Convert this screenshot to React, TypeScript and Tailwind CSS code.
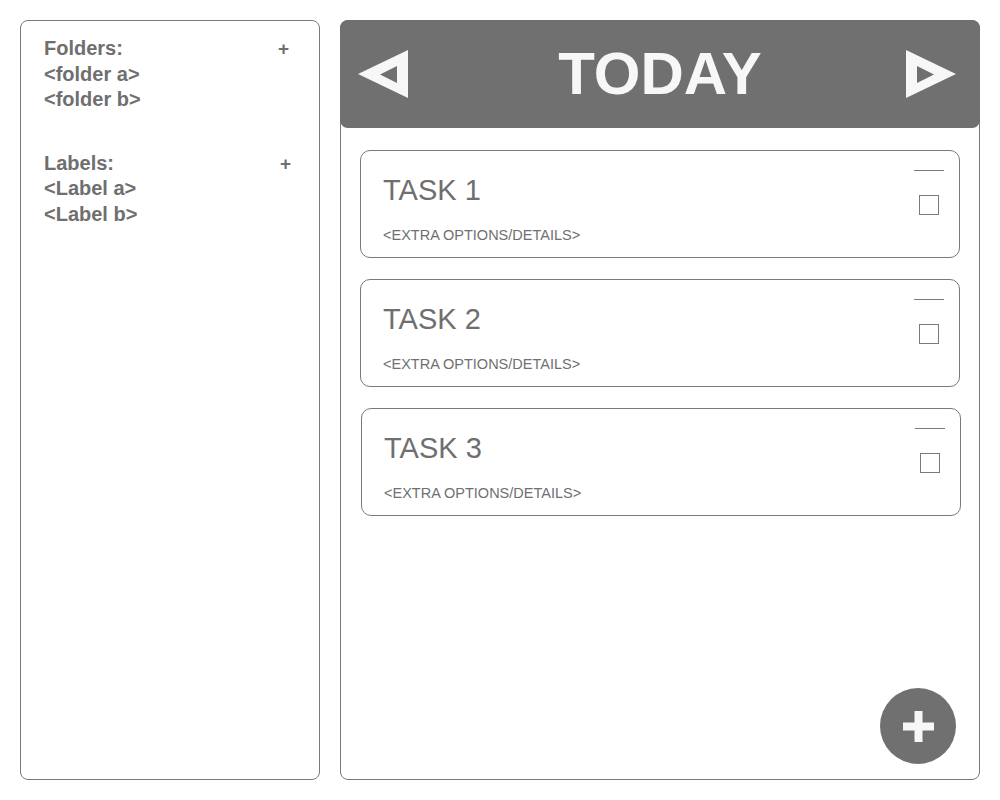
// Today view wireframe: sidebar with folders/labels, task list on the right

const tasks = [
  { title: 'TASK 1', shift: false },
  { title: 'TASK 2', shift: false },
  { title: 'TASK 3', shift: true },
]

function Arrow({ dir }: { dir: 'left' | 'right' }) {
  const d =
    dir === 'left'
      ? 'M50 0 L0 24 L50 48 Z M39 16 L22 24.5 L39 33 Z'
      : 'M0 0 L50 24 L0 48 Z M11 16 L28 24.5 L11 33 Z'
  return (
    <svg width="50" height="48" viewBox="0 0 50 48" aria-hidden="true">
      <path d={d} fill="#f7f7f7" fillRule="evenodd" />
    </svg>
  )
}

function Section({ title, items, plusPad }: { title: string; items: string[]; plusPad: string }) {
  return (
    <div className="flex flex-col">
      <div className={`flex items-center justify-between ${plusPad}`}>
        <span>{title}</span>
        <span className="text-[19px]">+</span>
      </div>
      {items.map((item) => (
        <span key={item}>{item}</span>
      ))}
    </div>
  )
}

function TaskCard({ title, shift }: { title: string; shift: boolean }) {
  return (
    <div
      className={`flex h-[108px] justify-between rounded-[10px] border border-[#7a7a7a] bg-white ${
        shift ? 'ml-[20px] mr-[18px]' : 'mx-[19px]'
      }`}
    >
      <div className="flex flex-col pl-[22px] pt-[25px]">
        <span className="text-[29px] leading-none text-[#6f6f6f]">{title}</span>
        <span className="mt-[23px] text-[14.5px] leading-none text-[#707070]">
          &lt;EXTRA OPTIONS/DETAILS&gt;
        </span>
      </div>
      <div className="flex flex-col items-end pr-[15px] pt-[19px]">
        <div className="h-px w-[30px] bg-[#7a7a7a]" />
        <div className="mr-[5px] mt-[24px] h-5 w-5 border border-[#7a7a7a]" />
      </div>
    </div>
  )
}

export default function App() {
  return (
    <div
      className="flex h-[800px] w-[1000px] gap-5 bg-white p-5"
      style={{ fontFamily: '"Liberation Sans", Arial, sans-serif' }}
    >
      {/* Sidebar */}
      <aside className="flex w-[300px] flex-col gap-[38px] rounded-lg border border-[#7a7a7a] pl-[23px] pt-[15px] text-[20px] font-bold leading-[25.5px] text-[#6f6f6f]">
        <Section title="Folders:" items={['<folder a>', '<folder b>']} plusPad="pr-[30px]" />
        <Section title="Labels:" items={['<Label a>', '<Label b>']} plusPad="pr-[28px]" />
      </aside>

      {/* Main panel */}
      <main className="relative flex w-[640px] flex-col rounded-lg border border-[#7a7a7a]">
        <header className="-mx-px -mt-px grid h-[108px] grid-cols-[1fr_auto_1fr] items-center rounded-lg bg-[#707070]">
          <div className="ml-[18px] justify-self-start">
            <Arrow dir="left" />
          </div>
          <h1 className="text-[60px] font-bold leading-none text-[#f7f7f7]">TODAY</h1>
          <div className="mr-[24px] justify-self-end">
            <Arrow dir="right" />
          </div>
        </header>

        <div className="mt-[22px] flex flex-col gap-[21px]">
          {tasks.map((t) => (
            <TaskCard key={t.title} title={t.title} shift={t.shift} />
          ))}
        </div>

        {/* Floating add button */}
        <button
          className="absolute bottom-[15px] right-[23px] flex h-[76px] w-[76px] items-center justify-center rounded-full bg-[#707070]"
          aria-label="Add task"
        >
          <svg width="31" height="31" viewBox="0 0 31 31" aria-hidden="true">
            <rect x="11.5" y="0" width="8" height="31" fill="#f7f7f7" />
            <rect x="0" y="11.5" width="31" height="8" fill="#f7f7f7" />
          </svg>
        </button>
      </main>
    </div>
  )
}
